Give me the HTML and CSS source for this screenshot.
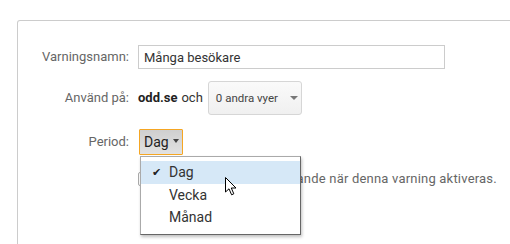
FILE: index.html
```html
<!DOCTYPE html>
<html lang="sv">
<head>
<meta charset="UTF-8">
<title>Varning</title>
<link rel="stylesheet" href="styles.css">
</head>
<body>
<div class="panel">
 <div class="form">
  <label class="label">Varningsnamn:</label>
  <div class="field"><input class="text-input" type="text" value="Många besökare"></div>

  <label class="label label-mid">Använd på:</label>
  <div class="field field-mid">
   <b class="site">odd.se</b> <span class="och">och</span>
   <button class="views-button">0 andra vyer <span class="caret"></span></button>
  </div>

  <label class="label label-period">Period:</label>
  <div class="field period-field">
   <button class="period-button">Dag <span class="caret caret-dark"></span></button>
   <div class="menu">
    <div class="menu-item selected"><span class="check">&#10004;</span>Dag</div>
    <div class="menu-item">Vecka</div>
    <div class="menu-item">Månad</div>
   </div>
  </div>

  <div class="label"></div>
  <div class="field check-field">
   <span class="checkbox"></span>
   <span class="check-text">Skicka ett e-postmeddelande när denna varning aktiveras.</span>
  </div>
 </div>
 <svg class="cursor" width="14" height="21" viewBox="0 0 14 21">
  <path d="M1.5 1.5 L1.5 16 L5 12.8 L7.6 18.8 L9.8 17.8 L7.3 12 L12 12 Z" fill="#fff" stroke="#000" stroke-width="1" stroke-linejoin="round"/>
 </svg>
</div>
</body>
</html>
```

FILE: styles.css
```css
body, html {
 margin: 0;
 height: 244px;
 background-color: #fff;
 font-family: Roboto, "Liberation Sans", Arial, sans-serif;
 font-size: 13px;
 color: #333;
 overflow: hidden;
}
.panel {
 position: relative;
 margin: 20px -20px 0 17px;
 height: 224px;
 border: 1px solid #ccc;
 border-bottom: none;
 border-radius: 3px 3px 0 0;
 box-sizing: border-box;
}
.form {
 display: grid;
 grid-template-columns: 111px auto;
 column-gap: 9px;
 padding-top: 24px;
}
.label {
 text-align: right;
 color: #666;
 line-height: 24px;
}
.field {
 display: flex;
 align-items: center;
}
.text-input {
 width: 307px;
 height: 24px;
 box-sizing: border-box;
 border: 1px solid #ccc;
 padding: 0 5px;
 font: inherit;
 color: #333;
 outline: none;
}
.label-mid, .field-mid {
 margin-top: 12px;
 line-height: 34px;
}
.site {
 color: #222;
 margin-right: 4px;
}
.och {
 color: #333;
 margin-right: 5px;
}
.views-button {
 height: 34px;
 width: 94px;
 border: 1px solid #d6d6d6;
 border-radius: 3px;
 background: linear-gradient(#fafafa, #f0f0f0);
 font-family: inherit;
 font-size: 11.5px;
 color: #444;
 padding: 0 0 0 7px;
 white-space: nowrap;
 display: flex;
 align-items: center;
}
.caret {
 display: inline-block;
 width: 0;
 height: 0;
 border-left: 4px solid transparent;
 border-right: 4px solid transparent;
 border-top: 4px solid #777;
 margin-left: 12px;
}
.caret-dark {
 border-top-color: #444;
 border-left-width: 3.5px;
 border-right-width: 3.5px;
 margin-left: 4px;
 margin-top: -2px;
}
.label-period, .period-field {
 margin-top: 14px;
 line-height: 26px;
}
.period-field {
 position: relative;
}
.period-button {
 height: 26px;
 width: 44px;
 border: 1px solid #f5a623;
 border-radius: 1px;
 background: linear-gradient(#cfcfcf, #e2e2e2);
 font-family: inherit;
 font-size: 14px;
 color: #222;
 padding: 0 0 0 4px;
 display: flex;
 align-items: center;
 margin-left: 1px;
}
.check-field {
 margin-top: 11px;
 height: 25px;
}
.checkbox {
 width: 12px;
 height: 12px;
 border: 1px solid #aaa;
 border-radius: 2px;
 margin-right: 1px;
}
.check-text {
 color: #666;
 white-space: nowrap;
 letter-spacing: 0.2px;
}
.menu {
 position: absolute;
 top: 27px;
 left: 2px;
 width: 161px;
 height: 79px;
 box-sizing: border-box;
 background: #fff;
 border: 1px solid #aaa;
 border-right-color: #666;
 border-bottom-color: #666;
 box-shadow: 1px 2px 3px rgba(0, 0, 0, 0.25);
 padding-top: 4px;
 z-index: 2;
}
.menu-item {
 position: relative;
 height: 22px;
 line-height: 22px;
 padding-left: 28px;
 font-size: 14px;
 color: #333;
}
.menu-item.selected {
 background: #d6e8f7;
 height: 23px;
 line-height: 23px;
}
.check {
 position: absolute;
 left: 11px;
 font-size: 11px;
 color: #222;
}
.cursor {
 position: absolute;
 left: 206px;
 top: 155px;
 z-index: 3;
}
```
